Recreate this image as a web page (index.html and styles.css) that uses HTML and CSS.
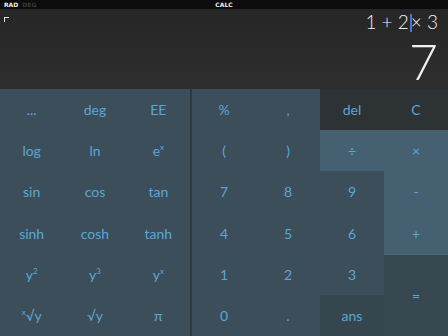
FILE: index.html
```html
<!DOCTYPE html>
<html lang="en">

<head>
    <meta charset="UTF-8">
    <title>Calc</title>
    <link rel="stylesheet" href="styles.css">
</head>

<body>
    <div class="status">
        <span class="mode"><b>RAD</b> <i>DEG</i></span>
        <span class="title">CALC</span>
    </div>

    <div class="display">
        <span class="corner"></span>
        <div class="expr">1 + 2<span class="cursor"></span>× 3</div>
        <div class="result">7</div>
    </div>

    <div class="keypad">
        <div class="sci">
            <span class="key">...</span>
            <span class="key">deg</span>
            <span class="key">EE</span>
            <span class="key">log</span>
            <span class="key">ln</span>
            <span class="key">e<sup>x</sup></span>
            <span class="key">sin</span>
            <span class="key">cos</span>
            <span class="key">tan</span>
            <span class="key">sinh</span>
            <span class="key">cosh</span>
            <span class="key">tanh</span>
            <span class="key">y<sup>2</sup></span>
            <span class="key">y<sup>3</sup></span>
            <span class="key">y<sup>x</sup></span>
            <span class="key"><sup>x</sup>√y</span>
            <span class="key">√y</span>
            <span class="key">π</span>
        </div>
        <div class="main">
            <span class="key">%</span>
            <span class="key">,</span>
            <span class="key dark">del</span>
            <span class="key dark">C</span>
            <span class="key">(</span>
            <span class="key">)</span>
            <span class="key light">÷</span>
            <span class="key light">×</span>
            <span class="key">7</span>
            <span class="key">8</span>
            <span class="key">9</span>
            <span class="key light">-</span>
            <span class="key">4</span>
            <span class="key">5</span>
            <span class="key">6</span>
            <span class="key light">+</span>
            <span class="key">1</span>
            <span class="key">2</span>
            <span class="key">3</span>
            <span class="key equals">=</span>
            <span class="key">0</span>
            <span class="key">.</span>
            <span class="key ans">ans</span>
        </div>
    </div>
</body>

</html>
```

FILE: styles.css
```css
* {
    margin: 0;
    padding: 0;
    box-sizing: border-box;
}

body {
    width: 448px;
    height: 336px;
    overflow: hidden;
    background: #2c2c2c;
    font-family: Lato, "Open Sans", sans-serif;
}

.status {
    height: 9px;
    background: #0c0c0c;
    display: flex;
    align-items: center;
    position: relative;
    padding-left: 4px;
    font-family: "DejaVu Sans", sans-serif;
    font-size: 6px;
    font-weight: bold;
    color: #f2f2f2;
}

.status i {
    font-style: normal;
    color: #3a3a3a;
    margin-left: 2px;
}

.status .title {
    position: absolute;
    left: 0;
    right: 0;
    text-align: center;
}

.display {
    height: 80px;
    background: linear-gradient(#262626, #2e2e2e);
    position: relative;
    padding: 2px 10px 0 0;
    text-align: right;
    color: #f0f0f0;
}

.display .corner {
    position: absolute;
    left: 4px;
    top: 8px;
    width: 5px;
    height: 5px;
    border-top: 1px solid #e0e0e0;
    border-left: 1px solid #e0e0e0;
}

.expr {
    font-size: 19px;
    font-weight: 300;
    line-height: 22px;
}

.cursor {
    display: inline-block;
    width: 2px;
    height: 18px;
    background: #4f6fd8;
    vertical-align: -3px;
    margin: 0 -1px 0 1px;
}

.result {
    font-size: 50px;
    font-weight: 300;
    line-height: 52px;
    margin-top: 2px;
}

.keypad {
    height: 247px;
    display: flex;
    background: #3c4e59;
}

.sci {
    width: 192px;
    border-right: 2px solid #2e3a41;
    display: grid;
    grid-template-columns: repeat(3, 1fr);
    grid-template-rows: repeat(6, 1fr);
}

.main {
    flex: 1;
    display: grid;
    grid-template-columns: repeat(4, 1fr);
    grid-template-rows: repeat(6, 1fr);
}

.key {
    display: flex;
    align-items: center;
    justify-content: center;
    color: #5ba6d6;
    font-size: 14px;
}

.key sup {
    font-size: 8px;
    align-self: flex-start;
    margin-top: 12px;
}

.key.dark {
    background: #2d3235;
}

.key.light {
    background: #456070;
}

.key.equals {
    grid-row: span 2;
    background: #37474f;
    border-top: 1px solid #4a6574;
}

.key.ans {
    background: #36464f;
}
```
